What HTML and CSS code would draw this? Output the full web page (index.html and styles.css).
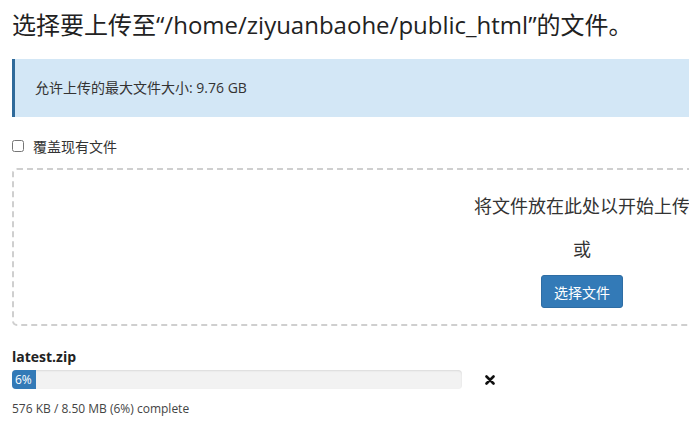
FILE: index.html
```html
<!DOCTYPE html>
<html lang="zh-CN">
<head>
<meta charset="utf-8">
<title>上传文件</title>
<link rel="stylesheet" href="styles.css">
</head>
<body>
<div class="page">
  <h1 class="title">选择要上传至“/home/ziyuanbaohe/public_html”的文件。</h1>
  <div class="info">允许上传的最大文件大小: 9.76 GB</div>
  <label class="overwrite"><input type="checkbox" class="cb"><span>覆盖现有文件</span></label>
  <div class="dropzone">
    <div class="drop-text">将文件放在此处以开始上传</div>
    <div class="drop-or">或</div>
    <button class="btn">选择文件</button>
  </div>
  <div class="file">
    <div class="file-name">latest.zip</div>
    <div class="file-row">
      <div class="progress"><div class="bar" style="width:24px">6%</div></div>
      <svg class="cancel" width="10" height="10" viewBox="0 0 10 10"><path d="M1.5 1.5 L8.5 8.5 M8.5 1.5 L1.5 8.5" stroke="#111" stroke-width="2.6" stroke-linecap="round"/></svg>
    </div>
    <div class="status">576 KB / 8.50 MB (6%) complete</div>
  </div>
</div>
</body>
</html>
```

FILE: styles.css
```css
html, body {
  margin: 0;
  padding: 0;
  overflow: hidden;
  background: #fff;
}
body {
  font-family: "Open Sans", "Noto Sans CJK SC", sans-serif;
  color: #333;
}
.page {
  width: 1140px;
  padding: 0 12px;
}
.title {
  margin: 0;
  padding-top: 8px;
  font-size: 24px;
  line-height: 34px;
  font-weight: 400;
  color: #222;
  white-space: nowrap;
}
.info {
  margin-top: 17px;
  height: 58px;
  box-sizing: border-box;
  border-left: 3px solid #2f6a9a;
  background: #d3e7f6;
  padding-left: 20px;
  font-size: 14px;
  line-height: 58px;
  color: #333;
}
.overwrite {
  display: flex;
  align-items: center;
  margin-top: 20px;
  height: 18px;
  font-size: 14px;
  color: #333;
}
.cb {
  margin: 0 9px 0 0;
  width: 12px;
  height: 12px;
}
.dropzone {
  margin-top: 13px;
  height: 158px;
  box-sizing: border-box;
  border: 2px dashed #cfcfcf;
  border-radius: 5px;
  display: flex;
  flex-direction: column;
  align-items: center;
  padding-top: 24px;
}
.drop-text {
  font-size: 18px;
  line-height: 24px;
  color: #333;
}
.drop-or {
  margin-top: 19px;
  font-size: 18px;
  line-height: 24px;
  color: #333;
}
.btn {
  margin-top: 14px;
  width: 82px;
  height: 33px;
  border: 1px solid #2e6da4;
  border-radius: 3px;
  background: #337ab7;
  color: #fff;
  font-family: "Open Sans", "Noto Sans CJK SC", sans-serif;
  font-size: 14px;
  padding: 0;
}
.file {
  margin-top: 21px;
}
.file-name {
  font-size: 14px;
  font-weight: 700;
  line-height: 20px;
  color: #222;
}
.file-row {
  display: flex;
  align-items: center;
  margin-top: 3px;
}
.progress {
  width: 450px;
  height: 19px;
  background: #f2f2f2;
  border-radius: 4px;
  box-shadow: inset 0 1px 2px rgba(0,0,0,0.1);
  overflow: hidden;
}
.bar {
  height: 100%;
  background: #337ab7;
  color: #fff;
  font-size: 12px;
  line-height: 19px;
  padding-left: 3px;
  box-sizing: border-box;
}
.cancel {
  margin-left: 23px;
}
.status {
  margin-top: 12px;
  font-size: 12px;
  line-height: 16px;
  color: #444;
}
```
